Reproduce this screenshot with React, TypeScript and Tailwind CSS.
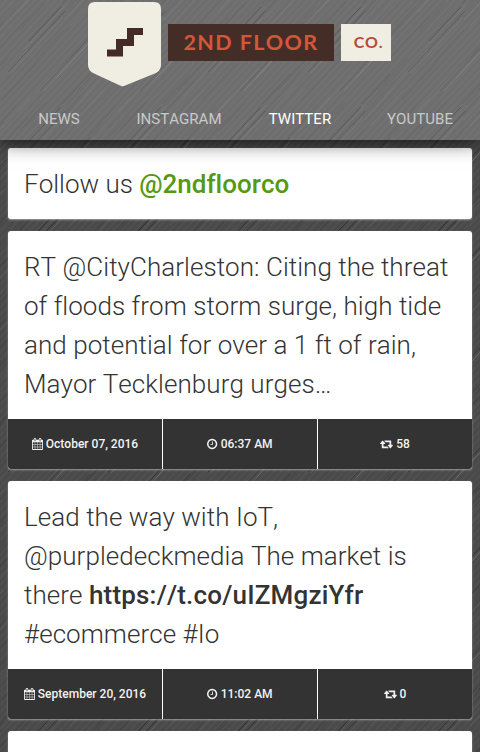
import React from "react";

type Tweet = {
  body: React.ReactNode;
  date: string;
  time: string;
  retweets: number;
};

const navItems = [
  { label: "News", width: "w-[118px]" },
  { label: "Instagram", width: "w-[122px]" },
  { label: "Twitter", width: "w-[120px]", active: true },
  { label: "YouTube", width: "w-[120px]" },
];

const tweets: Tweet[] = [
  {
    body: "RT @CityCharleston: Citing the threat of floods from storm surge, high tide and potential for over a 1 ft of rain, Mayor Tecklenburg urges…",
    date: "October 07, 2016",
    time: "06:37 AM",
    retweets: 58,
  },
  {
    body: (
      <>
        Lead the way with IoT, @purpledeckmedia The market is there{" "}
        <a href="#" className="font-medium tracking-[0.18px]">
          https://t.co/uIZMgziYfr
        </a>{" "}
        #ecommerce #Io
      </>
    ),
    date: "September 20, 2016",
    time: "11:02 AM",
    retweets: 0,
  },
];

// x, y, length, opacity of each scratch in the 100px tile
const darkScratches = [
  [8, 72, 57, 0.3],
  [29, 141, 32, 0.38],
  [62, 104, 28, 0.2],
  [40, 91, 50, 0.2],
  [-12, 60, 40, 0.12],
  [20, 30, 26, 0.14],
  [70, 58, 34, 0.14],
  [52, 126, 44, 0.12],
  [78, 90, 30, 0.15],
  [2, 100, 36, 0.1],
  [34, 62, 30, 0.1],
  [88, 36, 28, 0.12],
];

const lightScratches = [
  [11, 73, 52, 0.09],
  [44, 91, 46, 0.1],
  [26, 48, 40, 0.06],
  [56, 78, 38, 0.07],
  [84, 96, 44, 0.06],
  [0, 30, 30, 0.06],
  [70, 26, 34, 0.07],
  [18, 112, 40, 0.06],
  [64, 120, 30, 0.06],
];

const offsets = [-100, 0, 100];

const Scratches = ({ lines, color }: { lines: number[][]; color: string }) => (
  <>
    {offsets.map((dx) =>
      offsets.map((dy) =>
        lines.map(([x, y, len, opacity], i) => (
          <path
            key={`${dx}-${dy}-${i}`}
            d={`M${x + dx} ${y + dy}l${len} ${-len * 1.07}`}
            stroke={color}
            strokeOpacity={opacity}
          />
        ))
      )
    )}
  </>
);

const Texture = () => (
  <svg className="absolute inset-0 h-full w-full" aria-hidden="true">
    <defs>
      <pattern id="grain" width="7" height="7.5" patternUnits="userSpaceOnUse">
        <path d="M-1 8.57L8 -1.07" stroke="#fff" strokeOpacity=".03" />
        <path d="M-4 8L4 -.5M3 8L11 -.5" stroke="#000" strokeOpacity=".04" />
      </pattern>
      <pattern id="scratches" width="100" height="100" patternUnits="userSpaceOnUse">
        <Scratches lines={darkScratches} color="#000" />
        <Scratches lines={lightScratches} color="#fff" />
      </pattern>
    </defs>
    <rect width="100%" height="100%" fill="url(#grain)" />
    <rect width="100%" height="100%" fill="url(#scratches)" />
  </svg>
);

const CalendarIcon = () => (
  <svg viewBox="0 0 1664 1792" className="h-3 w-[11px] shrink-0" fill="currentColor">
    <path
      transform="translate(-64 0)"
      d="M192 1664h288v-288h-288v288zm352 0h320v-288h-320v288zm-352-352h288v-320h-288v320zm352 0h320v-320h-320v320zm-352-384h288v-288h-288v288zm736 736h320v-288h-320v288zm-384-736h320v-288h-320v288zm768 736h288v-288h-288v288zm-384-352h320v-320h-320v320zm-352-864v-288q0-13-9.5-22.5t-22.5-9.5h-64q-13 0-22.5 9.5t-9.5 22.5v288q0 13 9.5 22.5t22.5 9.5h64q13 0 22.5-9.5t9.5-22.5zm736 864h288v-320h-288v320zm-384-384h320v-288h-320v288zm384 0h288v-288h-288v288zm32-480v-288q0-13-9.5-22.5t-22.5-9.5h-64q-13 0-22.5 9.5t-9.5 22.5v288q0 13 9.5 22.5t22.5 9.5h64q13 0 22.5-9.5t9.5-22.5zm384-64v1280q0 52-38 90t-90 38h-1408q-52 0-90-38t-38-90v-1280q0-52 38-90t90-38h128v-96q0-66 47-113t113-47h64q66 0 113 47t47 113v96h384v-96q0-66 47-113t113-47h64q66 0 113 47t47 113v96h128q52 0 90 38t38 90z"
    />
  </svg>
);

const ClockIcon = () => (
  <svg viewBox="128 0 1536 1792" className="h-3 w-[10.3px] shrink-0" fill="currentColor">
    <path d="M1024 544v448q0 14-9 23t-23 9h-320q-14 0-23-9t-9-23v-64q0-14 9-23t23-9h224v-352q0-14 9-23t23-9h64q14 0 23 9t9 23zm416 352q0-148-73-273t-198-198-273-73-273 73-198 198-73 273 73 273 198 198 273 73 273-73 198-198 73-273zm224 0q0 209-103 385.5t-279.5 279.5-385.5 103-385.5-103-279.5-279.5-103-385.5 103-385.5 279.5-279.5 385.5-103 385.5 103 279.5 279.5 103 385.5z" />
  </svg>
);

const RetweetIcon = () => (
  <svg viewBox="0 0 1920 1792" className="h-3 w-[13px] shrink-0" fill="currentColor">
    <path d="M1280 1504q0 13-9.5 22.5t-22.5 9.5h-960q-8 0-13.5-2t-9-7-5.5-8-3-11.500-1-11.500v-600h-192q-26 0-45-19t-19-45q0-24 15-41l320-384q19-22 49-22t49 22l320 384q15 17 15 41 0 26-19 45t-45 19h-192v384h576q16 0 25 11l160 192q7 10 7 21zm640-416q0 24-15 41l-320 384q-20 23-49 23t-49-23l-320-384q-15-17-15-41 0-26 19-45t45-19h192v-384h-576q-16 0-25-12l-160-192q-7-9-7-20 0-13 9.500-22.500t22.500-9.500h960q8 0 13.500 2t9 7 5.500 8 3 11.500 1 11.500v600h192q26 0 45 19t19 45z" />
  </svg>
);

const Logo = () => (
  <div className="flex h-[90px] items-start pl-[88px] pt-[2px] font-['Lato',sans-serif] font-bold">
    <svg viewBox="0 0 73 85" className="h-[85px] w-[73px]">
      <path
        d="M7 0H66Q73 0 73 7V63Q73 68 68 71L36 84Q34 84.500 32 83.500L5 71Q0 68 0 63V7Q0 0 7 0Z"
        fill="#f0ede2"
      />
      <path d="M19 47.500H28V37H39V26H55V33H46V44H35V54.500H19Z" fill="#452b26" />
    </svg>
    <div className="mt-[22px] ml-[7px] flex h-[37px] w-[166px] items-center justify-center bg-[#452d27] pb-px text-[21.5px] tracking-[1.4px] text-[#d4573a]">
      2ND FLOOR
    </div>
    <div className="mt-[22px] ml-[7px] flex h-[37px] w-[50px] items-center justify-center bg-[#f0ede2] pb-px pl-[5px] text-[16px] tracking-[0.8px] text-[#bb4a35]">
      CO.
    </div>
  </div>
);

const Header = () => (
  <header className="relative z-10 h-[140px] bg-white/20 shadow-[0_0_20px_rgba(0,0,0,0.9)]">
    <Logo />
    <nav className="flex h-[50px] items-center pt-[9px] text-[15px] tracking-[0.05px] uppercase">
      {navItems.map((item) => (
        <a
          key={item.label}
          href="#"
          className={`text-center ${item.width} ${item.active ? "text-white" : "text-[#c9c9c9]"}`}
        >
          {item.label}
        </a>
      ))}
    </nav>
  </header>
);

const Card = ({ children }: { children?: React.ReactNode }) => (
  <article className="overflow-hidden rounded-[3px] bg-white shadow-[0_1px_2px_rgba(255,255,255,0.45)]">
    {children}
  </article>
);

const TweetCard = ({ tweet }: { tweet: Tweet }) => (
  <Card>
    <p className="h-[188px] px-4 pt-[17px] tracking-[0.05px]">{tweet.body}</p>
    <div className="grid h-[50px] grid-cols-[154px_154px_154px] gap-px bg-white text-xs font-medium text-[#f2f2f2]">
      <span className="flex items-center justify-center gap-[3px] bg-[#333]">
        <CalendarIcon />
        {tweet.date}
      </span>
      <span className="flex items-center justify-center gap-[3px] bg-[#333]">
        <ClockIcon />
        {tweet.time}
      </span>
      <span className="flex items-center justify-center gap-[3px] bg-[#333]">
        <RetweetIcon />
        {tweet.retweets}
      </span>
    </div>
  </Card>
);

const App: React.FC = () => {
  return (
    <div className="relative h-[752px] w-[480px] overflow-hidden bg-[#4b4b4b] font-['Roboto',sans-serif] [font-kerning:none] [font-variant-ligatures:none]">
      <Texture />
      <Header />
      <main className="relative flex flex-col gap-3 px-2 pt-2 text-[26px] leading-[39px] font-light text-[#333]">
        <Card>
          <p className="h-[71px] px-4 pt-[17px]">
            Follow us{" "}
            <a href="#" className="font-medium text-[#559911]">
              @2ndfloorco
            </a>
          </p>
        </Card>
        {tweets.map((tweet) => (
          <TweetCard key={tweet.date} tweet={tweet} />
        ))}
        <Card>
          <div className="h-20" />
        </Card>
      </main>
    </div>
  );
};

export default App;
